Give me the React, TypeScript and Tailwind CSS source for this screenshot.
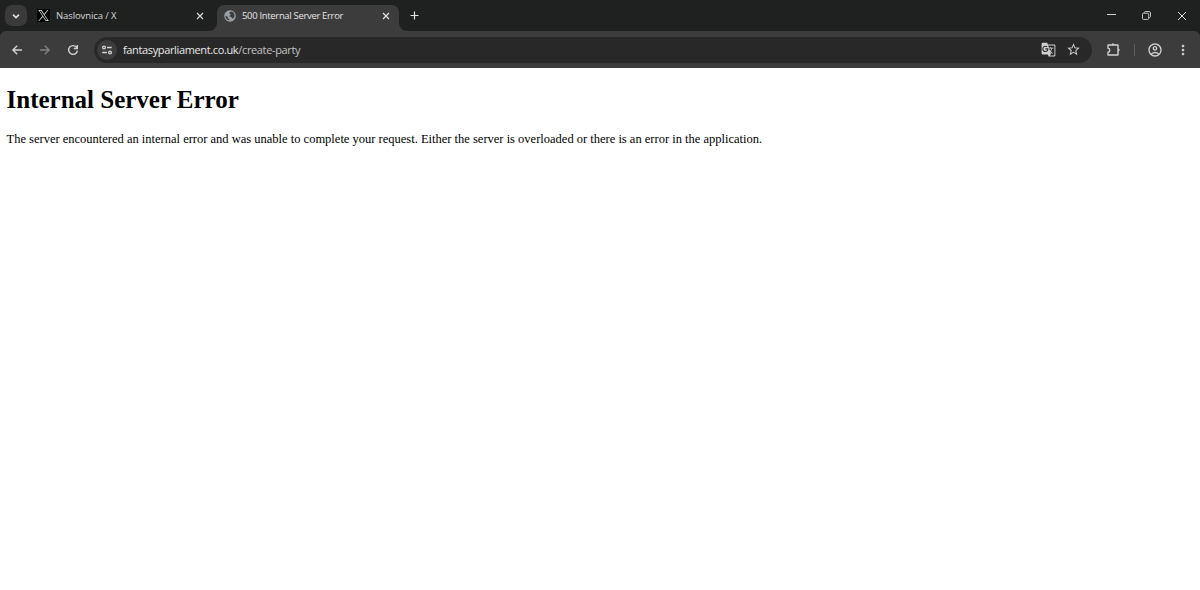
import type { ReactNode } from "react";
import { MdGTranslate, MdMoreVert, MdOutlineAccountCircle, MdStarOutline } from "react-icons/md";

const CloseIcon = ({ className }: { className: string }) => (
  <svg className={className} viewBox="0 0 8 8" fill="none" stroke="currentColor" strokeWidth={1.2}>
    <path d="M1 1l6 6M7 1L1 7" />
  </svg>
);

const XLogo = () => (
  <svg className="w-[11px] h-[11px]" viewBox="0 0 24 24" fill="#e7e7e7">
    <path d="M14.3 10.2 22.8 0h-2l-7.4 8.8L7.5 0H.7l9 13.3L.7 24h2l7.9-9.3 6.2 9.3h6.8zM11.5 13.5l-.9-1.3L3.4 1.6h3.2l5.8 8.6.9 1.3 7.6 11.1h-3.2z" />
  </svg>
);

const GlobeIcon = () => (
  <svg className="h-[12px] w-[12px]" viewBox="0 0 12 12">
    <circle cx="6" cy="6" r="5.8" fill="#9aa0a6" />
    <path
      d="M7 1.5c-1 .2-1.7.9-1.5 1.7.3.9 1.2.7 1.1 1.6-.1.8-1.2.6-1.2 1.4 0 .7 1.6.4 2.2 1 .4.5.1 1.2.9 1.3.7 0 1.9-1 2-2.4C10.600 3.800 9.500 2 7 1.500zM1.500 5.500c.8.7 1.700.7 2.200 1.400.4.6-.1 1.200.5 1.600.5.400 1.200.3 1.200 1 0 .500-.400.8-.8.8C2.600 9.700 1.200 7.800 1.500 5.500z"
      fill="#3c3c3c"
    />
  </svg>
);

const ArrowIcon = ({ className }: { className?: string }) => (
  <svg className={`h-[12px] w-[12px] ${className ?? ""}`} viewBox="0 0 12 12" fill="none" stroke="currentColor" strokeWidth={1.4}>
    <path d="M11 6H2M6.200 1.700L1.900 6l4.300 4.300" />
  </svg>
);

const ReloadIcon = () => (
  <svg className="h-[12px] w-[12px]" viewBox="0 0 12 12" fill="none" stroke="currentColor" strokeWidth={1.4}>
    <path d="M10.400 6.600A4.400 4.400 0 1 1 9.800 3.700M10.300 1v3.500H6.800" />
  </svg>
);

const SiteSettingsIcon = () => (
  <svg className="w-[12px] h-[12px]" viewBox="0 0 12 12" fill="none" stroke="#d5d5d5" strokeWidth={1.3}>
    <circle cx="3" cy="3.5" r="1.4" />
    <path d="M6 3.5h4.7M1.2 8.5h4.7" />
    <circle cx="9" cy="8.5" r="1.4" />
  </svg>
);

const ExtensionIcon = () => (
  <svg className="w-[15px] h-[15px]" viewBox="0 0 15 15" fill="none" stroke="#cfcfcf" strokeWidth={1.4} strokeLinejoin="round">
    <path d="M2 3h10v10H2V10.300c2.400-.2 2.400-3.800 0-4z" />
    <path d="M5.700 2.600c.2-1.300 2.400-1.300 2.600 0zM12.400 6.700c1.300.2 1.300 2.400 0 2.600z" fill="#cfcfcf" strokeWidth={0.6} />
  </svg>
);

// The little outward curve at the foot of the active tab
const TabFoot = ({ side }: { side: "left" | "right" }) => (
  <svg
    className={`absolute bottom-0 w-2 h-2 ${side === "left" ? "-left-2" : "-right-2 -scale-x-100"}`}
    viewBox="0 0 8 8"
    fill="#3c3c3c"
  >
    <path d="M8 0v8H0a8 8 0 0 0 8-8z" />
  </svg>
);

const IconSlot = ({ children, className }: { children: ReactNode; className: string }) => (
  <div className={`flex h-full shrink-0 items-center justify-center ${className}`}>{children}</div>
);

function TabStrip() {
  return (
    <div className="flex h-[31px] items-stretch text-[#d7d7d7] text-[9.5px]">
      <div className="ml-[5px] mt-[5px] flex h-[21px] w-[22px] items-center justify-center rounded-[7px] bg-[#3a3a3a]">
        <svg className="h-[8px] w-[8px]" viewBox="0 0 8 8" fill="none" stroke="#e3e3e3" strokeWidth={1.5}>
          <path d="M1 2.6l3 3 3-3" />
        </svg>
      </div>
      <div className="flex w-[190px] items-center pl-[10px]">
        <div className="flex h-[13px] w-[13px] items-center justify-center bg-black">
          <XLogo />
        </div>
        <span className="ml-[6px] w-[140px] pt-[2px] whitespace-nowrap tracking-[-0.1px]">Naslovnica / X</span>
        <CloseIcon className="h-[8px] w-[8px]" />
      </div>
      <div className="relative mt-[5px] flex w-[182px] items-center rounded-t-[7px] bg-[#3c3c3c] pb-[5px] pl-[7px] text-[#e3e3e3]">
        <TabFoot side="left" />
        <GlobeIcon />
        <span className="ml-[6px] w-[140px] pt-[2px] whitespace-nowrap tracking-[-0.33px]">500 Internal Server Error</span>
        <CloseIcon className="h-[8px] w-[8px]" />
        <TabFoot side="right" />
      </div>
      <IconSlot className="w-[31px]">
        <svg className="h-[9px] w-[9px]" viewBox="0 0 9 9" stroke="#e3e3e3" strokeWidth={1.2}>
          <path d="M4.5 .5v8M.5 4.5h8" />
        </svg>
      </IconSlot>
      <div className="ml-auto flex">
        <IconSlot className="w-[35px]">
          <span className="mb-[2px] h-px w-[9px] bg-[#d0d0d0]" />
        </IconSlot>
        <IconSlot className="w-[35px]">
          <svg className="h-[9px] w-[9px]" viewBox="0 0 9 9" fill="none" stroke="#d0d0d0" strokeWidth={0.9}>
            <rect x=".5" y="2.2" width="6.2" height="6.2" rx="1" />
            <path d="M2.3 2.1V1.6C2.3 1 2.8.5 3.4.5h3.7c.8 0 1.4.6 1.4 1.4v3.6c0 .6-.5 1.1-1.1 1.1h-.6" />
          </svg>
        </IconSlot>
        <IconSlot className="w-[36px]">
          <svg className="h-[10px] w-[10px]" viewBox="0 0 10 10" stroke="#dedede" strokeWidth={1}>
            <path d="M1 1l8 8M9 1L1 9" />
          </svg>
        </IconSlot>
      </div>
    </div>
  );
}

function Toolbar() {
  return (
    <div className="flex h-[37px] items-center rounded-t-[6px] bg-[#3c3c3c] text-[#d0d0d0]">
      <IconSlot className="ml-[3px] w-[28px]">
        <ArrowIcon />
      </IconSlot>
      <IconSlot className="w-[28px] text-[#808080]">
        <ArrowIcon className="-scale-x-100" />
      </IconSlot>
      <IconSlot className="w-[28px]">
        <ReloadIcon />
      </IconSlot>
      <div className="ml-[7px] flex h-[26px] w-[998px] items-center rounded-full bg-[#282828] pl-[3px]">
        <div className="flex h-[20px] w-[20px] items-center justify-center rounded-full bg-[#3c3c3c]">
          <SiteSettingsIcon />
        </div>
        <span className="ml-[6px] pt-px whitespace-nowrap text-[11px] tracking-[-0.36px] text-[#c3c3c3]">
          <span className="text-[#e8e8e8]">fantasyparliament.co.uk</span>/create-party
        </span>
        <MdGTranslate className="ml-auto h-[15px] w-[15px]" />
        <MdStarOutline className="ml-[10px] mr-[11px] h-[15px] w-[15px]" />
      </div>
      <IconSlot className="ml-[14px] w-[15px]">
        <ExtensionIcon />
      </IconSlot>
      <div className="ml-[13px] h-[12px] w-px bg-[#5e5e5e]" />
      <MdOutlineAccountCircle className="ml-[12px] h-[16px] w-[16px]" />
      <MdMoreVert className="ml-[12px] h-[16px] w-[16px]" />
    </div>
  );
}

export default function App() {
  return (
    <div className="h-[590px] w-[1200px] overflow-hidden bg-white">
      <header className="bg-[#1f2120] font-['Open_Sans','Noto_Sans',sans-serif]">
        <TabStrip />
        <Toolbar />
      </header>
      <main className="px-[6.5px] pt-[17px] font-['Liberation_Serif',serif] text-black">
        <h1 className="text-[25px] leading-[30px] font-bold">Internal Server Error</h1>
        <p className="mt-[16px] text-[12.5px] leading-[16px] whitespace-nowrap">
          The server encountered an internal error and was unable to complete your request. Either the server is
          overloaded or there is an error in the application.
        </p>
      </main>
    </div>
  );
}
